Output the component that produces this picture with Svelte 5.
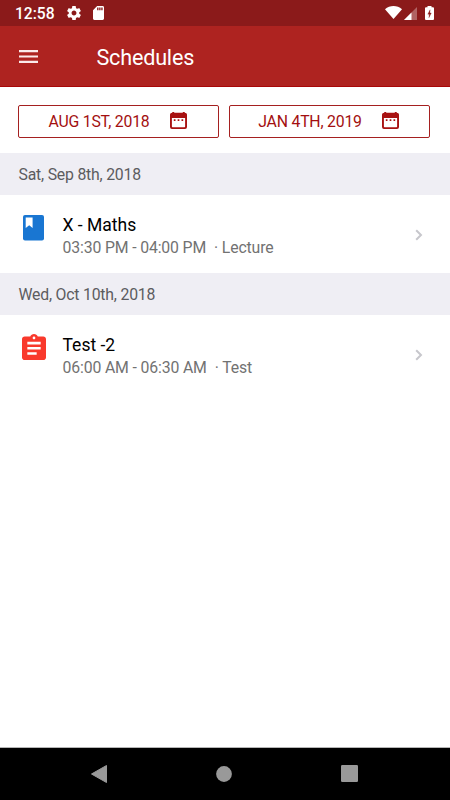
<script lang="ts">
	type Kind = "lecture" | "test";

	interface Entry {
		day: string;
		title: string;
		time: string;
		label: string;
		kind: Kind;
	}

	const range: string[] = ["Aug 1st, 2018", "Jan 4th, 2019"];

	const entries: Entry[] = [
		{ day: "Sat, Sep 8th, 2018", title: "X - Maths", time: "03:30 PM - 04:00 PM", label: "Lecture", kind: "lecture" },
		{ day: "Wed, Oct 10th, 2018", title: "Test -2", time: "06:00 AM - 06:30 AM", label: "Test", kind: "test" }
	];
</script>

<div class="screen">
	<div class="status">
		<span class="clock">12:58</span>
		<svg class="gear" width="14" height="14" viewBox="2 2 20 20" fill="#fff">
			<path d="M19.43 12.98c.04-.32.07-.64.07-.98s-.03-.66-.07-.98l2.11-1.65c.19-.15.24-.42.12-.64l-2-3.46c-.12-.22-.39-.3-.61-.22l-2.49 1c-.52-.4-1.08-.73-1.69-.98l-.38-2.65C14.46 2.18 14.25 2 14 2h-4c-.25 0-.46.18-.49.42l-.38 2.65c-.61.25-1.17.59-1.69.98l-2.49-1c-.23-.09-.49 0-.61.22l-2 3.46c-.13.22-.07.49.12.64l2.11 1.65c-.04.32-.07.65-.07.98s.03.66.07.98l-2.11 1.65c-.19.15-.24.42-.12.64l2 3.46c.12.22.39.3.61.22l2.49-1c.52.4 1.08.73 1.69.98l.38 2.65c.03.24.24.42.49.42h4c.25 0 .46-.18.49-.42l.38-2.65c.61-.25 1.17-.59 1.69-.98l2.49 1c.23.09.49 0 .61-.22l2-3.46c.12-.22.07-.49-.12-.64l-2.11-1.65zM12 15.500c-1.930 0-3.500-1.570-3.500-3.500s1.570-3.500 3.500-3.500 3.500 1.570 3.500 3.500-1.570 3.500-3.500 3.500z" />
		</svg>
		<svg class="card" width="11" height="14" viewBox="4 2 16 20" preserveAspectRatio="none" fill="#fff">
			<path d="M18 2h-8L4.02 8 4 20c0 1.100.9 2 2 2h12c1.100 0 2-.9 2-2V4c0-1.100-.9-2-2-2zm-6 6h-2V4h2v4zm3 0h-2V4h2v4zm3 0h-2V4h2v4z" />
		</svg>
		<svg class="wifi" width="17" height="13" viewBox="0 0 17 13">
			<path d="M0 3.200C4.800-1.050 12.200-1.050 17 3.200L8.500 13z" fill="#fff" />
		</svg>
		<svg class="signal" width="13" height="13" viewBox="0 0 13 13">
			<path d="M0 13 13 0V13z" fill="#fff" opacity=".32" />
			<path d="M0 13 7.500 5.500V13z" fill="#fff" />
		</svg>
		<svg class="battery" width="9" height="14" viewBox="0 0 9 14">
			<path d="M2.500 0h4v1.300H8q1 0 1 1V13q0 1-1 1H1q-1 0-1-1V2.300q0-1 1-1h1.500z" fill="#fff" />
			<path d="M5.100 3.800 2.800 8.200h1.500L3.900 11.700 6.300 7H4.900z" fill="#8b1a1a" stroke="#8b1a1a" stroke-width=".3" />
		</svg>
	</div>

	<header class="toolbar">
		<svg class="menu" width="19" height="13" viewBox="0 0 19 13" fill="#fbeaea">
			<path d="M0 0h19v2.200H0zM0 5.400h19v2.200H0zM0 10.700h19v2.200H0z" />
		</svg>
		<h1>Schedules</h1>
	</header>

	<div class="filters">
		{#each range as date}
			<button class="date">
				<span>{date}</span>
				<svg width="17" height="17" viewBox="0 0 17 17">
					<path fill="#a81212" fill-rule="evenodd" d="M2.300 0h1.900v.7h8.600V0h1.900v.7Q17 .8 17 2.600V15q0 2-2 2H2q-2 0-2-2V2.600Q0 .8 2.300.7zM1.900 5.900v8.700q0 .6.6.6h12q.6 0 .6-.6V5.900z" />
					<path fill="#a81212" d="M3.800 7.200h1.700v1.700H3.800zM7.650 7.200h1.700v1.700h-1.700zM11.500 7.200h1.700v1.700h-1.700z" />
				</svg>
			</button>
		{/each}
	</div>

	<main>
		{#each entries as entry}
			<h2>{entry.day}</h2>
			<div class="row">
				<div class="icon {entry.kind}">
					{#if entry.kind === "lecture"}
						<svg width="21" height="26" viewBox="0 0 21 26">
							<rect width="21" height="25.600" rx="2" fill="#1976d2" />
							<path d="M2.700 2.500h6.900v10.400L6.200 10.300l-3.500 2.600z" fill="#fff" />
						</svg>
					{:else}
						<svg width="24" height="26" viewBox="3 1 18 20" preserveAspectRatio="none">
							<path fill="#f9392c" d="M19 3h-4.180C14.400 1.840 13.300 1 12 1c-1.300 0-2.400.84-2.820 2H5c-1.100 0-2 .9-2 2v14c0 1.100.9 2 2 2h14c1.100 0 2-.9 2-2V5c0-1.100-.9-2-2-2zm-7 0c.55 0 1 .45 1 1s-.45 1-1 1-1-.45-1-1 .45-1 1-1zm2 14H7v-2h7v2zm3-4H7v-2h10v2zm0-4H7V7h10v2z" />
						</svg>
					{/if}
				</div>
				<div class="text">
					<div class="title">{entry.title}</div>
					<div class="meta"><span>{entry.time}</span><span class="label">· {entry.label}</span></div>
				</div>
				<svg class="chevron" width="8" height="12" viewBox="0 0 8 12">
					<path d="M1.200 1.200 6 6 1.200 10.800" fill="none" stroke="#c7c7cc" stroke-width="2" />
				</svg>
			</div>
		{/each}
	</main>

	<nav>
		<svg width="16" height="18" viewBox="0 0 16 18"><path d="M.5 9 15.500.5V17.500z" fill="#999" stroke="#999" stroke-linejoin="round" /></svg>
		<svg width="16" height="16" viewBox="0 0 16 16"><circle cx="8" cy="8" r="7.900" fill="#999" /></svg>
		<svg width="17" height="17" viewBox="0 0 17 17"><rect width="17" height="17" rx="1.200" fill="#999" /></svg>
	</nav>
</div>

<style>
	:global(body) {
		margin: 0;
	}

	.screen {
		display: flex;
		flex-direction: column;
		width: 450px;
		height: 800px;
		overflow: hidden;
		background: #fff;
		font-family: Roboto, sans-serif;
	}

	.screen svg {
		display: block;
		flex: none;
	}

	.status {
		display: flex;
		align-items: center;
		flex: none;
		box-sizing: border-box;
		height: 26px;
		padding: 0 16px 0 15px;
		background: #8b1a1a;
	}

	.clock {
		width: 52px;
		padding-top: 2px;
		color: #fff;
		font-size: 15.600px;
		font-weight: 500;
		line-height: 26px;
	}

	.card {
		margin-left: 12px;
	}

	.wifi {
		margin-left: auto;
		margin-bottom: 1px;
	}

	.signal {
		margin-left: 2px;
	}

	.battery {
		margin-left: 8px;
	}

	.toolbar {
		display: flex;
		align-items: center;
		flex: none;
		box-sizing: border-box;
		height: 61px;
		padding: 1px 19px 0;
		border-bottom: 1px solid #a80708;
		background: #ae2320;
	}

	h1 {
		margin: 2px 0 0 58.500px;
		color: #fff;
		font-size: 21.600px;
		font-weight: 400;
		letter-spacing: -0.2px;
		line-height: 28px;
	}

	.filters {
		display: grid;
		grid-template-columns: 1fr 1fr;
		gap: 10px;
		flex: none;
		box-sizing: border-box;
		height: 66px;
		padding: 18px 20px 15px 18px;
	}

	.date {
		display: flex;
		align-items: center;
		justify-content: center;
		gap: 20px;
		padding: 0 2px 0 0;
		border: 1px solid #a52020;
		border-radius: 2px;
		background: #fff;
		color: #a30f10;
		font-family: inherit;
		font-size: 15.800px;
		letter-spacing: -0.2px;
		text-transform: uppercase;
	}

	.date svg {
		margin-top: -2px;
	}

	main {
		flex: 1;
	}

	h2 {
		height: 42px;
		margin: 0;
		padding-left: 18.500px;
		background: #efeef4;
		color: #5c5c5f;
		font-size: 15.800px;
		font-weight: 400;
		letter-spacing: -0.2px;
		line-height: 43px;
	}

	.row {
		display: flex;
		box-sizing: border-box;
		height: 77.600px;
		padding: 19px 27px 0 22px;
	}

	.icon {
		width: 24px;
	}

	.lecture {
		padding: 1px 0 0 1px;
		box-sizing: border-box;
	}

	.text {
		flex: 1;
		padding-left: 16.500px;
	}

	.title {
		color: #000;
		font-size: 17.500px;
		line-height: 22px;
	}

	.meta {
		padding-top: 1px;
		color: #727272;
		font-size: 15.800px;
		letter-spacing: -0.14px;
		line-height: 22px;
	}

	.label {
		margin-left: 8px;
	}

	.chevron {
		margin-top: 15px;
	}

	nav {
		display: flex;
		align-items: center;
		justify-content: space-between;
		flex: none;
		box-sizing: border-box;
		height: 53px;
		padding: 0 92px 1px 91px;
		border-top: 1px solid #b5b5b5;
		background: #000;
	}
</style>
